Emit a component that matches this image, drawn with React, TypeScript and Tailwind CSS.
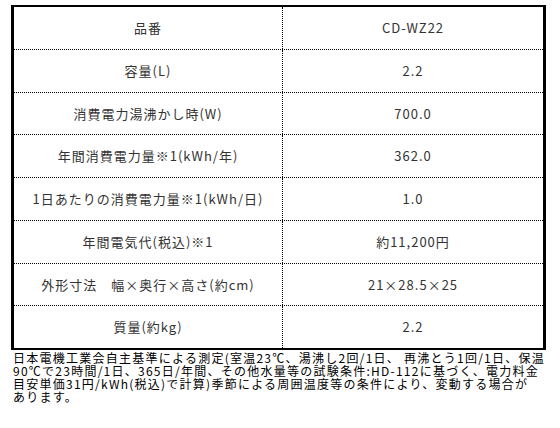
const rows: [string, string][] = [
  ["品番", "CD-WZ22"],
  ["容量(L)", "2.2"],
  ["消費電力湯沸かし時(W)", "700.0"],
  ["年間消費電力量※1(kWh/年)", "362.0"],
  ["1日あたりの消費電力量※1(kWh/日)", "1.0"],
  ["年間電気代(税込)※1", "約11,200円"],
  ["外形寸法　幅×奥行×高さ(約cm)", "21×28.5×25"],
  ["質量(約kg)", "2.2"],
];

const note = [
  "日本電機工業会自主基準による測定(室温23℃、湯沸し2回/1日、 再沸とう1回/1日、保温",
  "90℃で23時間/1日、365日/年間、その他水量等の試験条件:HD-112に基づく、電力料金",
  "目安単価31円/kWh(税込)で計算)季節による周囲温度等の条件により、変動する場合が",
  "あります。",
];

export default function App() {
  return (
    <div
      className="w-[560px] h-[428px] bg-white pl-[11px] pt-[5px]"
      style={{ fontFamily: '"Noto Sans CJK JP", sans-serif' }}
    >
      <div className="flex h-[345px] w-[535px] flex-col border-x-[3px] border-y-2 border-black">
        {rows.map(([label, value]) => (
          <div
            key={label}
            className="flex flex-1 border-b border-dotted border-black last:border-b-0"
          >
            <div className="flex w-[268px] items-center justify-center text-[13px] tracking-[1px] text-[#333]">
              {label}
            </div>
            <div className="flex flex-1 items-center justify-center border-l border-dotted border-black text-[13px] tracking-[1px] text-[#333]">
              {value}
            </div>
          </div>
        ))}
      </div>
      <div className="pt-[1px] pl-[2px] text-[12px] leading-[13px] tracking-[1.25px] text-black">
        {note.map((line) => (
          <div key={line} className="whitespace-nowrap">
            {line}
          </div>
        ))}
      </div>
    </div>
  );
}
